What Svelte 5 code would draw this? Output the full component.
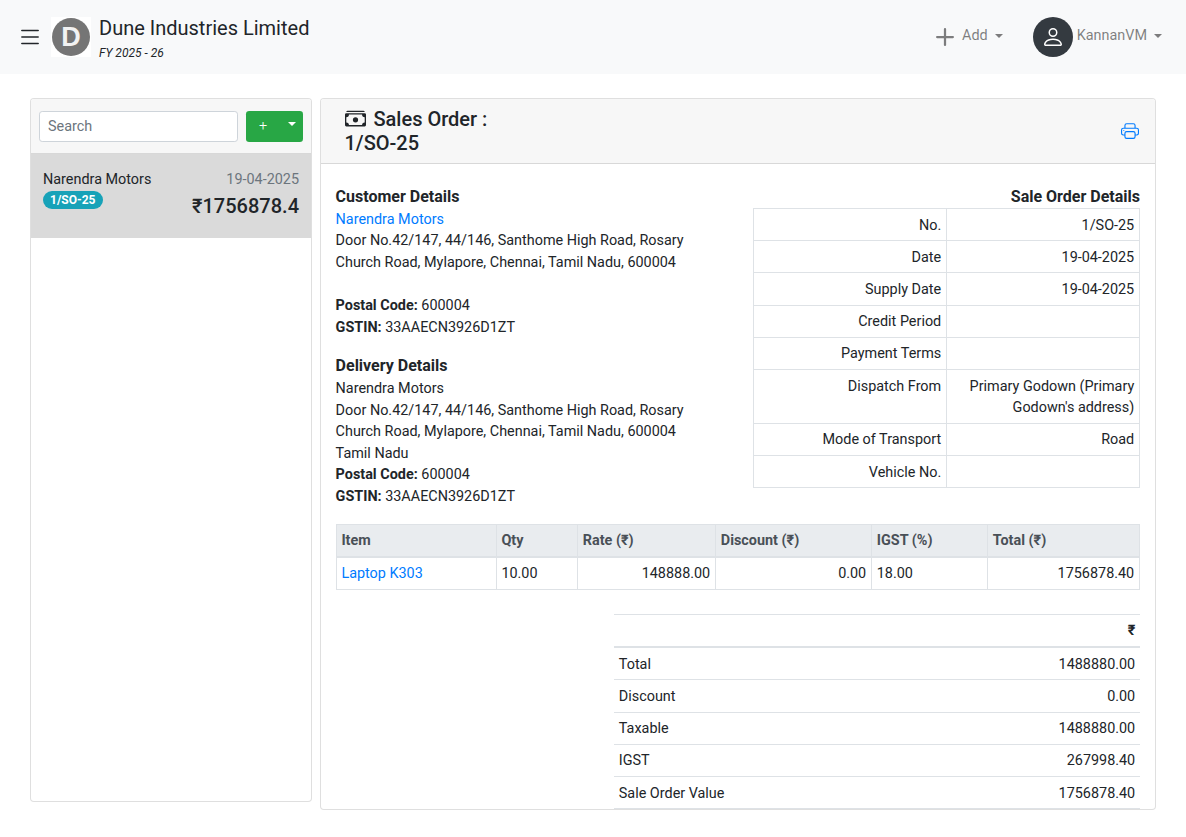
<script>
	const orderDetails = [
		["No.", "1/SO-25"],
		["Date", "19-04-2025"],
		["Supply Date", "19-04-2025"],
		["Credit Period", ""],
		["Payment Terms", ""],
		["Dispatch From", "Primary Godown (Primary Godown's address)"],
		["Mode of Transport", "Road"],
		["Vehicle No.", ""]
	];

	const totals = [
		["Total", "1488880.00"],
		["Discount", "0.00"],
		["Taxable", "1488880.00"],
		["IGST", "267998.40"],
		["Sale Order Value", "1756878.40"]
	];
</script>

<nav class="navbar">
	<svg class="menu" viewBox="0 0 16 16" fill="currentColor">
		<path fill-rule="evenodd" d="M2.5 12a.5.5 0 0 1 .5-.5h10a.5.5 0 0 1 0 1H3a.5.5 0 0 1-.5-.5m0-4a.5.5 0 0 1 .5-.5h10a.5.5 0 0 1 0 1H3a.5.5 0 0 1-.5-.5m0-4a.5.5 0 0 1 .5-.5h10a.5.5 0 0 1 0 1H3a.5.5 0 0 1-.5-.5" />
	</svg>
	<div class="logo"><span>D</span></div>
	<div class="brand">
		<div class="company">Dune Industries Limited</div>
		<div class="fy">FY 2025 - 26</div>
	</div>
	<div class="nav-right">
		<div class="nav-link add">
			<svg class="plus" viewBox="0 0 16 16" fill="currentColor">
				<path d="M8 4a.5.5 0 0 1 .5.5v3h3a.5.5 0 0 1 0 1h-3v3a.5.5 0 0 1-1 0v-3h-3a.5.5 0 0 1 0-1h3v-3A.5.5 0 0 1 8 4" />
			</svg>
			<span>Add</span>
			<i class="caret"></i>
		</div>
		<div class="nav-link user">
			<div class="avatar">
				<svg viewBox="0 0 16 16" fill="currentColor">
					<path d="M8 8a3 3 0 1 0 0-6 3 3 0 0 0 0 6m2-3a2 2 0 1 1-4 0 2 2 0 0 1 4 0m4 8c0 1-1 1-1 1H3s-1 0-1-1 1-4 6-4 6 3 6 4m-1-.004c-.001-.246-.154-.986-.832-1.664C11.516 10.68 10.289 10 8 10s-3.516.68-4.168 1.332c-.678.678-.83 1.418-.832 1.664z" />
				</svg>
			</div>
			<span>KannanVM</span>
			<i class="caret"></i>
		</div>
	</div>
</nav>

<main>
	<aside class="card list-card">
		<div class="list-head">
			<input class="search" placeholder="Search" />
			<div class="new-btn">
				<span class="new-plus">+</span>
				<i class="caret white"></i>
			</div>
		</div>
		<div class="list-item">
			<div class="item-left">
				<div>Narendra Motors</div>
				<span class="badge">1/SO-25</span>
			</div>
			<div class="item-right">
				<div class="date">19-04-2025</div>
				<div class="amount">₹1756878.4</div>
			</div>
		</div>
	</aside>

	<section class="card detail">
		<header class="detail-head">
			<h5>
				<svg class="cash" viewBox="0 0 16 16" fill="currentColor">
					<path d="M1 3a1 1 0 0 1 1-1h12a1 1 0 0 1 1 1zm7 8a2 2 0 1 0 0-4 2 2 0 0 0 0 4" />
					<path d="M0 5a1 1 0 0 1 1-1h14a1 1 0 0 1 1 1v8a1 1 0 0 1-1 1H1a1 1 0 0 1-1-1zm3 0a2 2 0 0 1-2 2v4a2 2 0 0 1 2 2h10a2 2 0 0 1 2-2V7a2 2 0 0 1-2-2z" />
				</svg>
				Sales Order :<br />1/SO-25
			</h5>
			<svg class="printer" viewBox="0 0 16 16" fill="currentColor">
				<path d="M2.5 8a.5.5 0 1 0 0-1 .5.5 0 0 0 0 1" />
				<path d="M5 1a2 2 0 0 0-2 2v2H2a2 2 0 0 0-2 2v3a2 2 0 0 0 2 2h1v1a2 2 0 0 0 2 2h6a2 2 0 0 0 2-2v-1h1a2 2 0 0 0 2-2V7a2 2 0 0 0-2-2h-1V3a2 2 0 0 0-2-2zM4 3a1 1 0 0 1 1-1h6a1 1 0 0 1 1 1v2H4zm1 5a2 2 0 0 0-2 2v1H2a1 1 0 0 1-1-1V7a1 1 0 0 1 1-1h12a1 1 0 0 1 1 1v3a1 1 0 0 1-1 1h-1v-1a2 2 0 0 0-2-2zm7 2v3a1 1 0 0 1-1 1H5a1 1 0 0 1-1-1v-3a1 1 0 0 1 1-1h6a1 1 0 0 1 1 1" />
			</svg>
		</header>

		<div class="detail-body">
			<div class="columns">
				<div class="addresses">
					<h6>Customer Details</h6>
					<a href="#customer">Narendra Motors</a>
					<p>Door No.42/147, 44/146, Santhome High Road, Rosary Church Road, Mylapore, Chennai, Tamil Nadu, 600004</p>
					<p class="gap"><b>Postal Code:</b> 600004</p>
					<p><b>GSTIN:</b> 33AAECN3926D1ZT</p>

					<h6 class="second">Delivery Details</h6>
					<p>Narendra Motors</p>
					<p>Door No.42/147, 44/146, Santhome High Road, Rosary Church Road, Mylapore, Chennai, Tamil Nadu, 600004</p>
					<p>Tamil Nadu</p>
					<p><b>Postal Code:</b> 600004</p>
					<p><b>GSTIN:</b> 33AAECN3926D1ZT</p>
				</div>
				<div class="order-info">
					<h6 class="right">Sale Order Details</h6>
					<table class="info-table">
						<tbody>
							{#each orderDetails as [label, value]}
								<tr>
									<td>{label}</td>
									<td>{value}</td>
								</tr>
							{/each}
						</tbody>
					</table>
				</div>
			</div>

			<table class="items">
				<colgroup>
					<col style="width: 160px" />
					<col style="width: 81.4px" />
					<col style="width: 138px" />
					<col style="width: 156px" />
					<col style="width: 116px" />
					<col />
				</colgroup>
				<thead>
					<tr>
						<th>Item</th>
						<th>Qty</th>
						<th>Rate (₹)</th>
						<th>Discount (₹)</th>
						<th>IGST (%)</th>
						<th>Total (₹)</th>
					</tr>
				</thead>
				<tbody>
					<tr>
						<td><a href="#item">Laptop K303</a></td>
						<td>10.00</td>
						<td class="num">148888.00</td>
						<td class="num">0.00</td>
						<td>18.00</td>
						<td class="num">1756878.40</td>
					</tr>
				</tbody>
			</table>

			<table class="totals">
				<thead>
					<tr>
						<th></th>
						<th class="num">₹</th>
					</tr>
				</thead>
				<tbody>
					{#each totals as [label, value]}
						<tr>
							<td>{label}</td>
							<td class="num">{value}</td>
						</tr>
					{/each}
				</tbody>
			</table>
		</div>
	</section>
</main>

<style>
	:global(body) {
		font-family: Roboto, "Liberation Sans", sans-serif;
		font-size: 14.4px;
		line-height: 1.5;
		color: #212529;
		background: #fff;
	}

	a {
		color: #007bff;
		text-decoration: none;
	}

	p {
		margin: 0;
	}

	.caret {
		display: inline-block;
		border-top: 4.3px solid currentColor;
		border-left: 4.3px solid transparent;
		border-right: 4.3px solid transparent;
	}

	.navbar {
		display: flex;
		align-items: center;
		height: 74px;
		box-sizing: border-box;
		padding: 0 16px;
		background: #f8f9fa;
	}

	.menu {
		width: 26px;
		height: 26px;
		margin-left: 1px;
	}

	.logo {
		width: 40px;
		height: 40px;
		margin-left: 8px;
		background: #fff;
		display: flex;
		align-items: center;
		justify-content: center;
	}

	.logo span {
		width: 38px;
		height: 38px;
		border-radius: 50%;
		background: #757575;
		color: #f2f2f2;
		font-family: "Liberation Sans", sans-serif;
		font-size: 27px;
		font-weight: 700;
		line-height: 38px;
		text-align: center;
	}

	.brand {
		margin-left: 8px;
		margin-top: 1px;
	}

	.company {
		font-size: 20px;
		line-height: 30px;
	}

	.fy {
		font-size: 12px;
		font-style: italic;
		line-height: 18px;
		margin-top: 1px;
	}

	.nav-right {
		margin-left: auto;
		display: flex;
		align-items: center;
		color: rgba(0, 0, 0, 0.5);
	}

	.nav-link {
		display: flex;
		align-items: center;
	}

	.nav-link span,
	.nav-link .caret {
		margin-bottom: 2px;
	}

	.plus {
		width: 36px;
		height: 36px;
	}

	.add span {
		margin-left: -1px;
	}

	.add .caret {
		margin-left: 7px;
		margin-right: 30px;
	}

	.avatar {
		width: 40px;
		height: 40px;
		border-radius: 50%;
		background: #343a40;
		color: #fff;
		display: flex;
		align-items: center;
		justify-content: center;
	}

	.avatar svg {
		width: 24px;
		height: 24px;
	}

	.user span {
		margin-left: 4px;
	}

	.user .caret {
		margin-left: 7px;
		margin-right: 8px;
	}

	main {
		display: flex;
		align-items: flex-start;
		gap: 8px;
		padding: 24px 30px 0;
	}

	.card {
		box-sizing: border-box;
		border: 1px solid rgba(0, 0, 0, 0.125);
		border-radius: 4px;
		background: #fff;
		overflow: hidden;
	}

	.list-card {
		width: 282px;
		height: 704px;
		flex: none;
	}

	.list-head {
		display: flex;
		gap: 8px;
		height: 55px;
		box-sizing: border-box;
		padding: 12px 8px 0;
		background: #f7f7f7;
		border-bottom: 1px solid rgba(0, 0, 0, 0.125);
	}

	.search {
		width: 199px;
		height: 31px;
		box-sizing: border-box;
		padding: 4px 8px;
		border: 1px solid #ced4da;
		border-radius: 3.2px;
		font: inherit;
		color: #495057;
		background: #fff;
	}

	.search::placeholder {
		color: #6c757d;
		opacity: 1;
	}

	.new-btn {
		position: relative;
		width: 57px;
		height: 31px;
		border-radius: 3.2px;
		background: #28a745;
		color: #fff;
	}

	.new-plus {
		position: absolute;
		left: 13px;
		top: 4px;
		font-weight: 300;
	}

	.new-btn .caret {
		position: absolute;
		right: 7px;
		top: 11px;
	}

	.list-item {
		display: flex;
		justify-content: space-between;
		height: 84px;
		box-sizing: border-box;
		padding: 15px 12px 0;
		background: #dadada;
	}

	.badge {
		display: inline-block;
		padding: 0 7px;
		border-radius: 10px;
		background: #17a2b8;
		color: #fff;
		font-size: 12px;
		font-weight: 700;
		line-height: 18px;
		vertical-align: top;
		margin-top: 0;
	}

	.item-right {
		text-align: right;
	}

	.date {
		color: #6c757d;
	}

	.amount {
		font-size: 20px;
		font-weight: 500;
		line-height: 30px;
		margin-top: 0;
	}

	.detail {
		flex: 1;
		height: 712px;
	}

	.detail-head {
		display: flex;
		align-items: center;
		justify-content: space-between;
		height: 65px;
		box-sizing: border-box;
		padding: 0 16px 0 23.5px;
		background: #f7f7f7;
		border-bottom: 1px solid rgba(0, 0, 0, 0.125);
	}

	h5 {
		margin: 0;
		font-size: 20px;
		font-weight: 500;
		line-height: 24px;
	}

	.cash {
		width: 21px;
		height: 21px;
		vertical-align: -3px;
		margin-right: 3px;
	}

	.printer {
		width: 18px;
		height: 18px;
		color: #007bff;
	}

	.detail-body {
		padding: 20.6px 15px 0 14.6px;
	}

	.columns {
		display: flex;
		justify-content: space-between;
	}

	.addresses {
		width: 387px;
	}

	.addresses a {
		display: block;
		margin-top: 0.7px;
	}

	.order-info {
		width: 387px;
	}

	h6 {
		margin: 0;
		font-size: 16px;
		font-weight: 700;
		line-height: 23.4px;
	}

	h6.second {
		margin-top: 15.6px;
		margin-bottom: 0.6px;
	}

	h6.right {
		text-align: right;
	}

	.gap {
		margin-top: 21.6px;
	}

	b {
		font-weight: 700;
	}

	table {
		border-collapse: collapse;
		width: 100%;
	}

	td,
	th {
		padding: 5.5px 4.8px 4.1px;
		vertical-align: top;
	}

	.info-table {
		table-layout: fixed;
	}

	.info-table td {
		border: 1px solid #dee2e6;
		text-align: right;
	}

	.items {
		table-layout: fixed;
		margin-top: 16px;
	}

	.items th,
	.items td {
		border: 1px solid #dee2e6;
	}

	.items th {
		text-align: left;
		font-weight: 700;
		color: #495057;
		background: #e9ecef;
		border-bottom-width: 2px;
	}

	.num {
		text-align: right;
	}

	.totals {
		width: 526px;
		margin: 24px 0 0 auto;
	}

	.totals th,
	.totals td {
		border-top: 1px solid #dee2e6;
	}

	.totals th {
		border-bottom: 2px solid #dee2e6;
	}

	.totals tr:last-child td {
		border-bottom: 1px solid #dee2e6;
	}
</style>
